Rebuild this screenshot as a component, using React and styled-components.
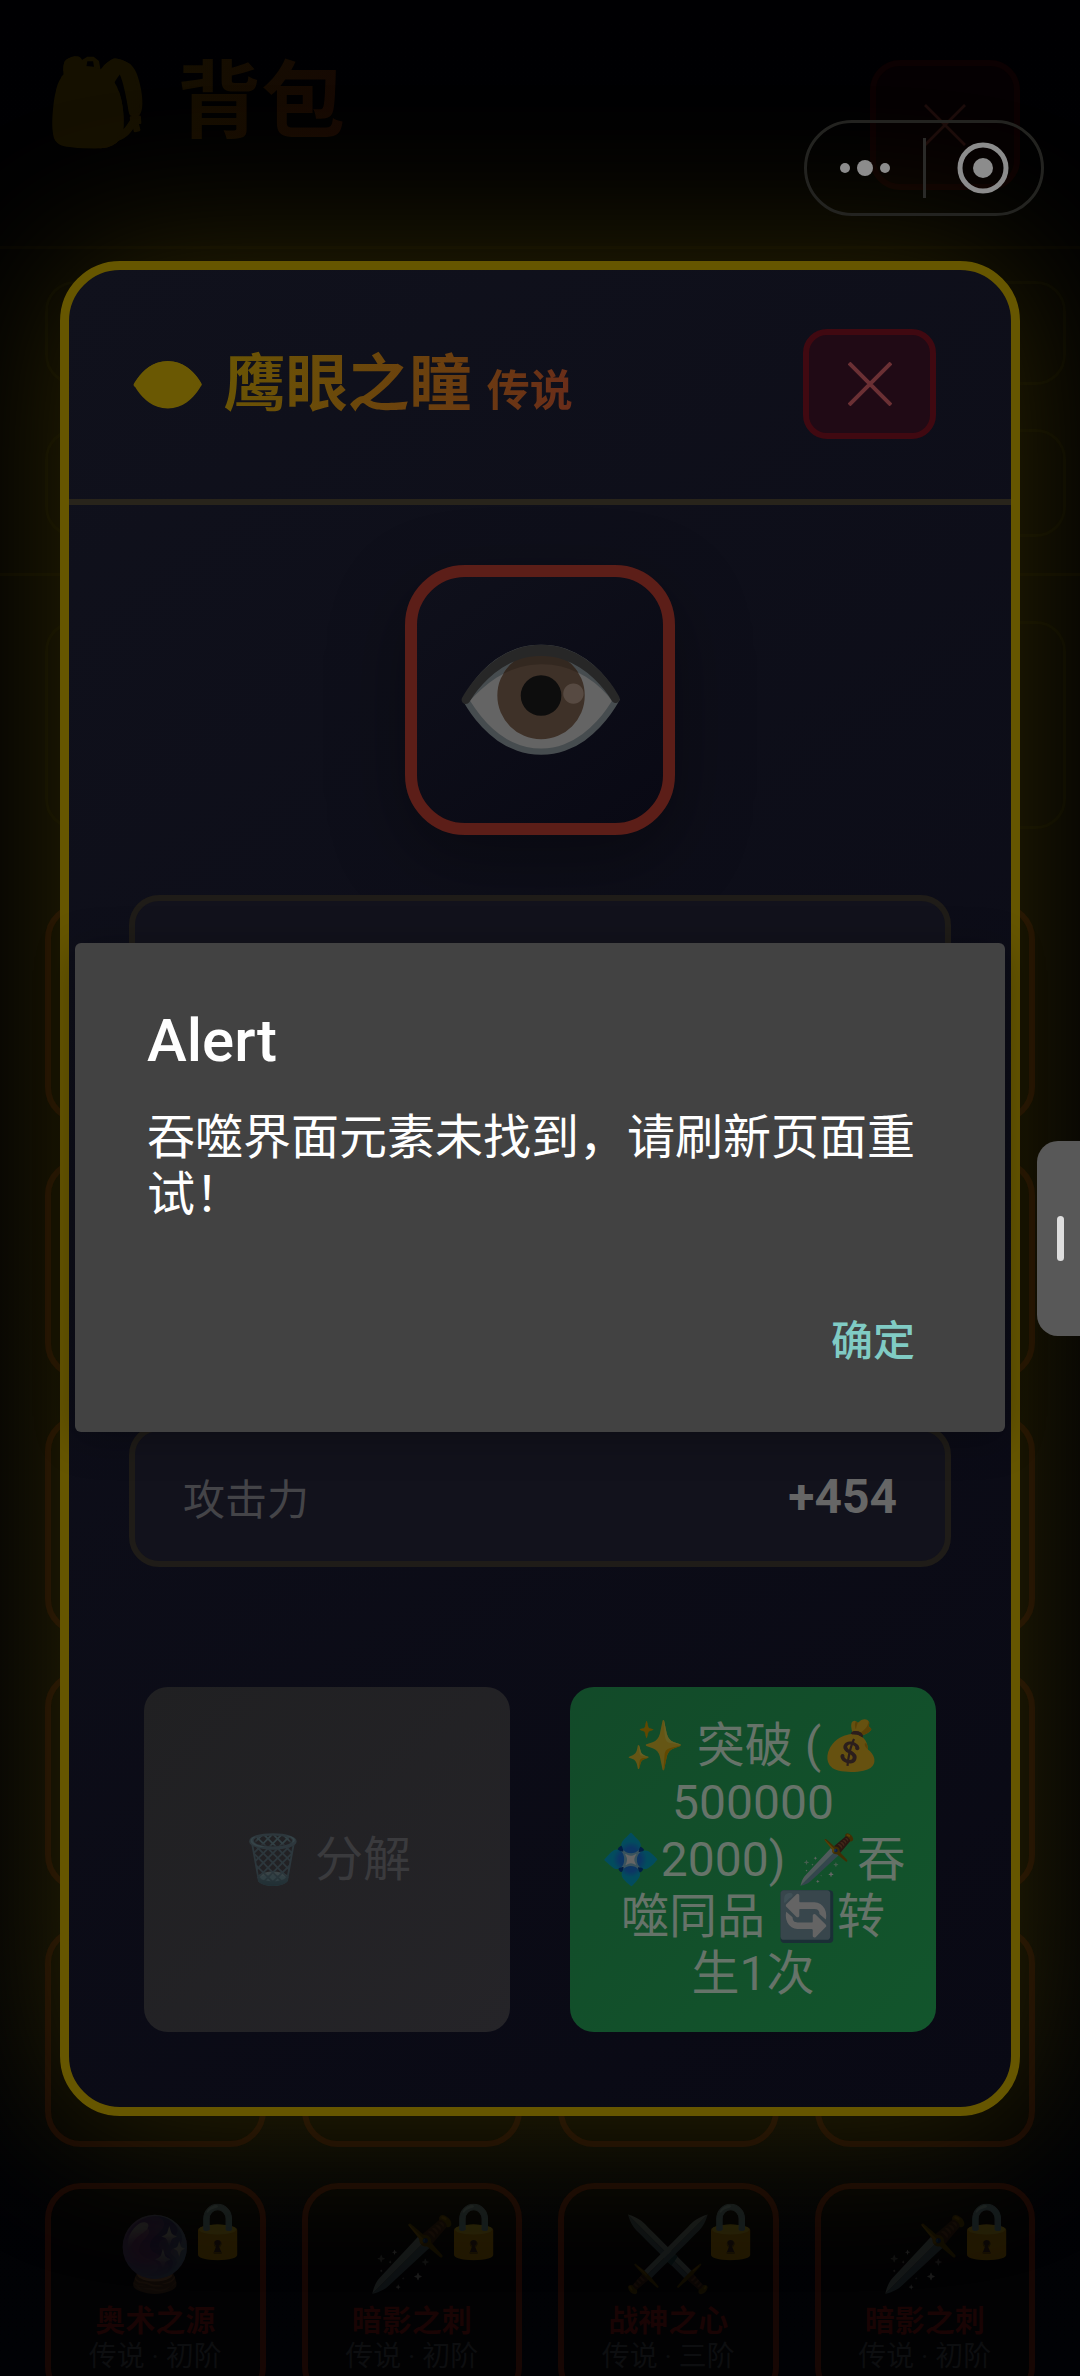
import React from "react";
import styled, { createGlobalStyle } from "styled-components";

const GlobalStyle = createGlobalStyle`
  *, *::before, *::after {
    box-sizing: border-box;
  }
  body {
    margin: 0;
    background-color: #010104;
    font-family: Roboto, "Noto Sans CJK SC", sans-serif;
    color: #666;
  }
  h1, h2, h3, p {
    margin: 0;
  }
  button {
    font-family: inherit;
    cursor: pointer;
  }
`;

const Screen = styled.div`
  position: relative;
  min-height: 100vh;
  overflow: hidden;
`;

/* backpack page under the dialogs */
const Page = styled.main`
  position: absolute;
  inset: 0;
  overflow: hidden;
  display: flex;
  flex-direction: column;
  background: linear-gradient(#000002, #010205);
`;

const PageHeader = styled.header`
  display: flex;
  justify-content: space-between;
  align-items: flex-start;
  padding: 36px 60px 56px 45px;
  border-bottom: 3px solid #050402;
`;

const PageTitle = styled.h1`
  padding-top: 8px;
  font-size: 84px;
  line-height: 118px;
  font-weight: 700;

  span {
    background: linear-gradient(110deg, #151000 30%, #160803);
    background-clip: text;
    color: transparent;
  }
  i {
    margin-right: 6px;
    font-style: normal;
  }
`;

const PageClose = styled.button`
  display: flex;
  align-items: center;
  justify-content: center;
  width: 150px;
  height: 130px;
  margin-top: 24px;
  padding: 0;
  border: 6px solid #0c0102;
  border-radius: 30px;
  background-color: #050002;
`;

const Bars = styled.div`
  padding-top: 32px;
`;

const Bar = styled.div`
  height: ${(props) => props.$height};
  margin: 0 14px ${(props) => props.$gap} 45px;
  border: 3px solid #050502;
  border-radius: 30px;
`;

const Divider = styled.div`
  height: 3px;
  margin-bottom: 45px;
  background-color: #060502;
`;

const Grid = styled.div`
  display: grid;
  grid-template-columns: repeat(4, 1fr);
  grid-auto-rows: 220px;
  gap: 36px;
  padding: 0 45px;
`;

const Card = styled.article`
  position: relative;
  display: flex;
  flex-direction: column;
  align-items: center;
  padding-top: 21px;
  border: 6px solid #170704;
  border-radius: 36px;
  background-color: #020203;
`;

const Art = styled.div`
  height: 93px;
  font-size: 72px;
  line-height: 90px;
  filter: brightness(0.1);
`;

const Lock = styled.div`
  position: absolute;
  top: 9px;
  right: 9px;
  font-size: 54px;
  line-height: 66px;
  filter: brightness(0.14);
`;

const CardName = styled.h3`
  font-size: 30px;
  line-height: 36px;
  font-weight: 700;
  color: #190404;
`;

const CardRank = styled.p`
  font-size: 28px;
  line-height: 36px;
  color: #0d0e10;
`;

/* item detail dialog */
const Layer = styled.div`
  position: relative;
  padding: 261px 60px;
`;

const Dialog = styled.section`
  border: 9px solid #665600;
  border-radius: 60px;
  background: linear-gradient(145deg, #10111c, #090914);
  box-shadow: 0 0 160px rgba(102, 86, 0, 0.45);
`;

const DialogHeader = styled.header`
  display: flex;
  justify-content: space-between;
  align-items: center;
  padding: 59px 75px 60px 60px;
  border-bottom: 6px solid #28241b;
`;

const DialogTitle = styled.h2`
  padding-top: 8px;
  font-size: 62px;
  line-height: 90px;
  font-weight: 700;

  span {
    background: linear-gradient(100deg, #6a5803 15%, #6b3c10 75%, #6a2c1a);
    background-clip: text;
    color: transparent;
  }
  i {
    margin-right: 2px;
    font-style: normal;
  }
  small {
    font-size: 43px;
  }
`;

const CloseButton = styled.button`
  display: flex;
  align-items: center;
  justify-content: center;
  width: 133px;
  height: 110px;
  padding: 0;
  border: 6px solid #400911;
  border-radius: 24px;
  background-color: #200a15;
`;

const DialogBody = styled.div`
  display: flex;
  flex-direction: column;
  padding: 60px;
`;

const ItemFrame = styled.div`
  display: flex;
  align-items: center;
  justify-content: center;
  align-self: center;
  width: 270px;
  height: 270px;
  margin-bottom: 60px;
  border: 12px solid #5c1e18;
  border-radius: 60px;
  background: linear-gradient(145deg, #0f101b, #090914);
  box-shadow: 0 24px 75px rgba(0, 0, 0, 0.35);
  font-size: 144px;
`;

const Panel = styled.div`
  min-height: ${(props) => props.$height};
  margin-bottom: 30px;
  border: 6px solid #1f1c18;
  border-radius: 30px;
  background-color: #12121c;
`;

const StatRow = styled(Panel)`
  display: flex;
  justify-content: space-between;
  align-items: center;
  margin-bottom: 0;
  padding: 0 48px;
  font-size: 42px;
  color: #444448;

  strong {
    font-size: 48px;
    color: #666;
  }
`;

const Actions = styled.footer`
  display: grid;
  grid-template-columns: 1fr 1fr;
  gap: 60px;
  padding: 60px 75px 75px;
`;

const ActionButton = styled.button`
  padding: 30px;
  border: none;
  border-radius: 24px;
  font-size: 48px;
  line-height: 57px;
  color: ${(props) => (props.disabled ? "#3a3a3d" : "#667369")};
  background: ${(props) =>
    props.disabled
      ? "linear-gradient(135deg, #202022, #252428)"
      : "linear-gradient(135deg, #124a29, #12552c)"};

  span {
    display: block;
    white-space: nowrap;
  }
`;

const Emoji = styled.i`
  display: inline-block;
  font-style: normal;
  line-height: 1;
  filter: brightness(0.4);
  opacity: ${(props) => (props.$faded ? 0.6 : 1)};
`;

/* system alert */
const AlertBox = styled.section`
  position: absolute;
  top: 943px;
  left: 75px;
  right: 75px;
  display: flex;
  flex-direction: column;
  padding: 62px 72px 42px;
  border-radius: 6px;
  background-color: #424242;
  color: #fff;
  box-shadow: 0 6px 40px rgba(0, 0, 0, 0.3);
`;

const AlertTitle = styled.h2`
  font-size: 60px;
  line-height: 72px;
  font-weight: 500;
`;

const AlertText = styled.p`
  margin-top: 32px;
  font-size: 48px;
  line-height: 57px;
`;

const AlertButton = styled.button`
  align-self: flex-end;
  margin-top: 71px;
  padding: 18px;
  border: none;
  background: none;
  font-size: 42px;
  line-height: 60px;
  font-weight: 500;
  color: #80cbc4;
`;

/* mini program capsule and edge handle */
const Capsule = styled.div`
  position: absolute;
  top: 120px;
  right: 36px;
  display: grid;
  grid-template-columns: 1fr 3px 1fr;
  align-items: center;
  width: 240px;
  height: 96px;
  border: 3px solid #232320;
  border-radius: 48px;

  button {
    display: flex;
    justify-content: center;
    padding: 0;
    border: none;
    background: none;
  }
`;

const CapsuleLine = styled.div`
  height: 60px;
  background-color: #2a2a28;
`;

const EdgeHandle = styled.div`
  position: absolute;
  top: 1141px;
  right: 0;
  display: flex;
  align-items: center;
  justify-content: center;
  width: 43px;
  height: 195px;
  padding-left: 3px;
  border-radius: 21px 0 0 21px;
  background-color: #585858;

  &::after {
    content: "";
    width: 7px;
    height: 45px;
    border-radius: 4px;
    background-color: #dedede;
  }
`;

const items = [
  { art: "🔮", name: "奥术之源", rank: "传说 · 初阶" },
  { art: "🗡️", name: "暗影之刺", rank: "传说 · 初阶" },
  { art: "⚔️", name: "战神之心", rank: "传说 · 三阶" },
  { art: "🗡️", name: "暗影之刺", rank: "传说 · 初阶" },
];

const Cross = ({ size, color, width }) => (
  <svg width={size} height={size} viewBox="0 0 44 44" fill="none" stroke={color} strokeWidth={width} aria-hidden="true">
    <path d="M1 1L43 43M43 1L1 43" />
  </svg>
);

const App = () => {
  const filler = Array.from({ length: 20 });

  return (
    <Screen>
      <GlobalStyle />
      <Page>
        <PageHeader>
          <PageTitle>
            <span>
              <i>🎒</i> 背包
            </span>
          </PageTitle>
          <PageClose aria-label="关闭背包">
            <Cross size={42} color="#1c0c0b" width={3} />
          </PageClose>
        </PageHeader>
        <Bars>
          <Bar $height="104px" $gap="44px" />
          <Bar $height="108px" $gap="36px" />
          <Divider />
          <Bar $height="208px" $gap="74px" />
        </Bars>
        <Grid>
          {filler.map((_, i) => (
            <Card key={i} />
          ))}
          {items.map((item, i) => (
            <Card key={i}>
              <Art>{item.art}</Art>
              <Lock>🔒</Lock>
              <CardName>{item.name}</CardName>
              <CardRank>{item.rank}</CardRank>
            </Card>
          ))}
        </Grid>
      </Page>

      <Layer>
        <Dialog>
          <DialogHeader>
            <DialogTitle>
              <span>
                <i>👁️</i> 鹰眼之瞳 <small>传说</small>
              </span>
            </DialogTitle>
            <CloseButton aria-label="关闭">
              <Cross size={44} color="#6b3034" width={4} />
            </CloseButton>
          </DialogHeader>
          <DialogBody>
            <ItemFrame>
              <Emoji>👁️</Emoji>
            </ItemFrame>
            <Panel $height="500px" />
            <StatRow $height="142px">
              <span>攻击力</span>
              <strong>+454</strong>
            </StatRow>
          </DialogBody>
          <Actions>
            <ActionButton disabled>
              <Emoji $faded>🗑️</Emoji> 分解
            </ActionButton>
            <ActionButton>
              <span><Emoji>✨</Emoji> 突破 (<Emoji>💰</Emoji></span>
              <span>500000</span>
              <span><Emoji>💠</Emoji>2000) <Emoji>🗡️</Emoji>吞</span>
              <span>噬同品 <Emoji>🔄</Emoji>转</span>
              <span>生1次</span>
            </ActionButton>
          </Actions>
        </Dialog>
      </Layer>

      <AlertBox role="alertdialog" aria-labelledby="alert-title" aria-describedby="alert-text">
        <AlertTitle id="alert-title">Alert</AlertTitle>
        <AlertText id="alert-text">吞噬界面元素未找到，请刷新页面重试！</AlertText>
        <AlertButton>确定</AlertButton>
      </AlertBox>

      <Capsule>
        <button aria-label="更多">
          <svg width="54" height="20" viewBox="0 0 54 20" fill="#8c8c8c">
            <circle cx="7" cy="10" r="5" />
            <circle cx="27" cy="10" r="8" />
            <circle cx="47" cy="10" r="5" />
          </svg>
        </button>
        <CapsuleLine />
        <button aria-label="退出">
          <svg width="52" height="52" viewBox="0 0 52 52">
            <circle cx="26" cy="26" r="23" fill="none" stroke="#8c8c8c" strokeWidth="5" />
            <circle cx="26" cy="26" r="10" fill="#8c8c8c" />
          </svg>
        </button>
      </Capsule>
      <EdgeHandle />
    </Screen>
  );
};

export default App;
